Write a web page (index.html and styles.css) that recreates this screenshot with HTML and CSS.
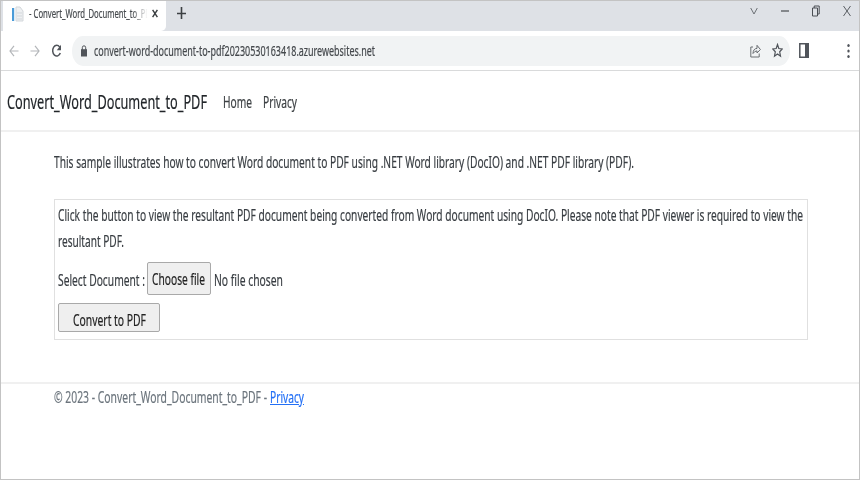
FILE: index.html
```
<!DOCTYPE html>
<html lang="en">
<head>
<meta charset="utf-8">
<title>Convert_Word_Document_to_PDF</title>
<link rel="stylesheet" href="styles.css">
</head>
<body>
<div class="window">
  <div class="tabstrip">
    <div class="tab">
      <svg class="favicon" width="12" height="17" viewBox="0 0 12 17"><path d="M0 2h2.200v13H0z" fill="#4a9bd8"/><path d="M4 1h4l3 4v10H4z" fill="#eef0f2" stroke="#d3d7db"/><path d="M5 7h5M5 10h5M5 13h5" stroke="#d3d7db"/></svg>
      <span class="fit tab-title" data-width="126">- Convert_Word_Document_to_PDF</span>
      <svg class="tab-close" width="6" height="9" viewBox="0 0 6 9"><path d="M.6.8l4.8 7.4M5.4.8L.6 8.2" stroke="#3c4043" stroke-width="1.5"/></svg>
    </div>
    <svg class="new-tab" width="9" height="12" viewBox="0 0 9 12"><path d="M4.500 0v12M0 6.500h9" stroke="#3c4043" stroke-width="1.600"/></svg>
    <div class="controls">
      <svg width="8" height="8" viewBox="0 0 8 8"><path d="M.7 1L4 7l3.300-6" fill="none" stroke="#6b6f74"/></svg>
      <svg width="8" height="8" viewBox="0 0 8 8"><path d="M0 4h8" stroke="#3c4043" stroke-width="1.100"/></svg>
      <svg width="8" height="12" viewBox="0 0 8 12"><path d="M.5 3h5v8h-5zM2.200 3V1h5v8H5.500" fill="none" stroke="#4b4f54"/></svg>
      <svg width="8" height="12" viewBox="0 0 8 12"><path d="M.5 1l7 10M7.500 1l-7 10" stroke="#5a5e63"/></svg>
    </div>
  </div>
  <div class="toolbar">
    <svg class="back" width="10" height="12" viewBox="0 0 10 12"><path d="M9.500 6H1M5 .8L1 6l4 5.200" fill="none" stroke="#b3b6b9" stroke-width="1.200"/></svg>
    <svg class="forward" width="10" height="12" viewBox="0 0 10 12"><path d="M.5 6H9M5 .8L9 6l-4 5.200" fill="none" stroke="#b3b6b9" stroke-width="1.200"/></svg>
    <svg class="reload" width="11" height="14" viewBox="0 0 11 14"><path d="M8.700 3.100A4 5.400 0 1 0 9.300 9" fill="none" stroke="#50545a" stroke-width="1.500"/><path d="M10 .8v5.400H5.800z" fill="#50545a"/></svg>
    <div class="address">
      <svg class="lock" width="6" height="12" viewBox="0 0 6 12"><path d="M0 4.200h6V11.500H0z" fill="#50545a"/><path d="M1.300 5V2.700q0-1.900 1.700-1.900t1.700 1.900V5" fill="none" stroke="#50545a"/></svg>
      <span class="fit url" data-width="281">convert-word-document-to-pdf20230530163418.azurewebsites.net</span>
      <svg class="share" width="11" height="15" viewBox="0 0 11 15"><path d="M3 4H.8v10h8.400v-3.500" fill="none" stroke="#6a6e73"/><path d="M3 10.500Q3.200 5.600 7 5.400V2.300L10.400 6.500 7 10V7.900Q4.500 8 3 10.500z" fill="none" stroke="#6a6e73"/></svg>
      <svg class="star" width="11" height="15" viewBox="0 0 11 15"><path d="M5.500 1.500L6.800 5.500 10.200 6 7.700 8.800 8.500 13.200 5.500 10.900 2.500 13.200 3.300 8.800.8 6 4.200 5.500z" fill="none" stroke="#50545a" stroke-width="1.200"/></svg>
    </div>
    <svg class="panel" width="10" height="15" viewBox="0 0 10 15"><path d="M.8.8h8.400v13.400H.8z" fill="#fff" stroke="#50545a" stroke-width="1.500"/><path d="M6 0h4v15H6z" fill="#50545a"/></svg>
    <svg class="menu" width="3" height="14" viewBox="0 0 3 14"><g fill="#50545a"><ellipse cx="1.500" cy="1.600" rx="1.200" ry="1.500"/><ellipse cx="1.500" cy="7" rx="1.200" ry="1.500"/><ellipse cx="1.500" cy="12.400" rx="1.200" ry="1.500"/></g></svg>
  </div>
  <nav class="navbar">
    <span class="fit brand" data-width="200">Convert_Word_Document_to_PDF</span>
    <span class="fit home" data-width="29">Home</span>
    <span class="fit privacy" data-width="34">Privacy</span>
  </nav>
  <main>
    <p class="intro"><span class="fit" data-width="580">This sample illustrates how to convert Word document to PDF using .NET Word library (DocIO) and .NET PDF library (PDF).</span></p>
    <section class="card">
      <p><span class="fit" data-width="745">Click the button to view the resultant PDF document being converted from Word document using DocIO. Please note that PDF viewer is required to view the</span></p>
      <p><span class="fit" data-width="66">resultant PDF.</span></p>
      <div class="picker">
        <span class="fit" data-width="87">Select Document :</span>
        <button class="choose"><span class="fit" data-width="53">Choose file</span></button>
        <span class="fit" data-width="69">No file chosen</span>
      </div>
      <button class="convert"><span class="fit" data-width="73">Convert to PDF</span></button>
    </section>
  </main>
  <footer>
    <span class="fit" data-width="213">© 2023 - Convert_Word_Document_to_PDF -</span>
    <a class="fit" data-width="34">Privacy</a>
  </footer>
</div>
<script src="fit.js"></script>
</body>
</html>
```
FILE: styles.css
```
* { box-sizing: border-box; }
body { margin: 0; font-family: "Noto Sans", "Open Sans", sans-serif; font-size: 16.4px; line-height: 26px; color: #383d42; }
p { margin: 0; height: 26px; }
svg { display: block; flex: none; }
.window { width: 860px; height: 480px; border: 1px solid #c3c3c3; background: #fff; overflow: hidden; }
.fit { display: block; flex: none; white-space: nowrap; transform-origin: 0 50%; -webkit-text-stroke: .2px currentColor; }
.tabstrip { display: flex; height: 30px; background: #dee1e6; padding-left: 2px; }
.tab { display: flex; width: 163px; height: 30px; background: #fff; border-radius: 0 0 5px 0; padding-left: 9px; overflow: hidden; }
.favicon { margin-top: 5px; }
.tab-title { margin: 0 0 0 5px; font-size: 12px; color: #45494d; -webkit-mask-image: linear-gradient(90deg, #000 82%, transparent 94%); mask-image: linear-gradient(90deg, #000 82%, transparent 94%); }
.tab-close { margin: 8px 0 0 -3px; }
.new-tab { margin: 6px 0 0 11px; }
.controls { display: flex; align-items: center; gap: 23px; height: 20px; margin-left: auto; padding-right: 8px; }
.toolbar { display: flex; align-items: center; height: 40px; padding-left: 8px; border-bottom: 1px solid #d9dadb; }
.forward { margin-left: 11px; }
.reload { margin-left: 11px; }
.address { display: flex; align-items: center; width: 718px; height: 30px; margin-left: 10px; padding-left: 9px; border-radius: 11px / 15px; background: #f1f3f4; }
.url { margin-left: 7px; font-size: 14px; color: #43474b; }
.share { margin-left: auto; }
.star { margin: 0 7px 0 11px; }
.panel { margin-left: 9px; }
.menu { margin-left: auto; margin-right: 9px; }
.navbar { display: flex; height: 61px; padding: 18px 0 0 6px; border-bottom: 2px solid #f0f0f0; color: #3d4144; }
.brand { margin-top: -1px; font-size: 20.2px; color: #212529; }
.home { margin-left: 16px; }
.privacy { margin-left: 11px; }
main { height: 250px; padding: 17px 51px 0 53px; }
.card { height: 141px; margin-top: 24px; padding: 3px 0 0 3px; border: 1px solid #e0e0e0; }
.card p { margin-top: -1px; margin-bottom: 1px; }
.picker { display: flex; align-items: center; height: 33px; margin-top: 9px; }
button { display: block; padding: 0; border: 1px solid #a9a9a9; border-radius: 2px; background: #efefef; font: inherit; color: #222; text-align: left; }
.choose { width: 64px; height: 33px; margin: -2px 3px 0 2px; padding-left: 4px; }
.picker .choose { margin-left: 2px; }
.convert { width: 102px; height: 29px; margin-top: 7px; padding: 3px 0 0 14px; line-height: 25px; }
footer { display: flex; height: 40px; padding: 0 0 0 53px; border-top: 2px solid #f0f0f0; color: #6c757d; }
footer a { margin-left: 3px; color: #2470f5; text-decoration: underline; }
```
FILE: fit.js
```
// Condenses each label horizontally to its column width.
document.querySelectorAll('.fit').forEach(function (el) {
  el.style.width = 'max-content';
  var natural = el.getBoundingClientRect().width;
  var target = Number(el.dataset.width);
  el.style.width = natural + 'px';
  el.style.marginRight = (target - natural) + 'px';
  el.style.transform = 'scaleX(' + target / natural + ')';
});
```
